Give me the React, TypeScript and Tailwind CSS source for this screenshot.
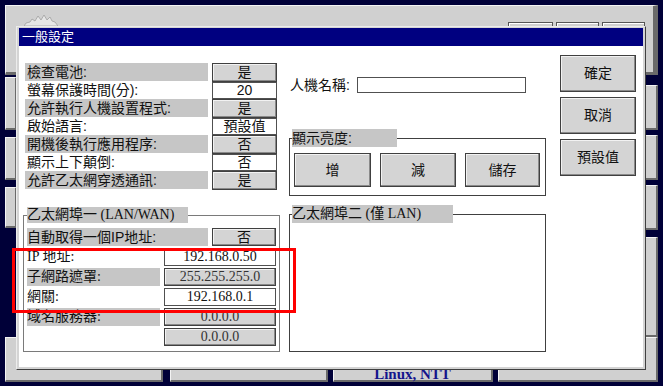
import React from 'react';

const sans = "font-['Liberation_Sans','Noto_Sans_CJK_TC',sans-serif]";
const serif = "font-['Liberation_Serif','Noto_Sans_CJK_TC',serif]";
const btn = "bg-[#d4d4d4] border border-[#404040] shadow-[inset_-1px_-1px_0_#8a8a8a,inset_1px_1px_0_#f2f2f2]";
const field = "bg-white border border-[#505050]";
const bgBtn = "bg-[#d0d0d0] border-t border-l border-t-[#f4f4f4] border-l-[#f4f4f4] border-r-2 border-b-2 border-r-[#6a6a6a] border-b-[#6a6a6a]";

const generalRows = [
  { label: '檢查電池:', value: '是', button: true },
  { label: '螢幕保護時間(分):', value: '20', button: false },
  { label: '允許執行人機設置程式:', value: '是', button: true },
  { label: '啟始語言:', value: '預設值', button: false },
  { label: '開機後執行應用程序:', value: '否', button: true },
  { label: '顯示上下顛倒:', value: '否', button: false },
  { label: '允許乙太網穿透通訊:', value: '是', button: true },
];

const lanRows = [
  { label: 'IP 地址:', value: '192.168.0.50', shaded: false },
  { label: '子網路遮罩:', value: '255.255.255.0', shaded: true },
  { label: '網關:', value: '192.168.0.1', shaded: false },
  { label: '域名服務器:', value: '0.0.0.0', shaded: true },
  { label: '', value: '0.0.0.0', shaded: false, grey: true },
];

const Logo = () => (
  <svg width="34" height="12" viewBox="0 0 34 12">
    <path
      d="M0 12 L2 9 L6 8 L8 5 L11 7 L14 2 L17 6 L20 1 L23 6 L26 3 L28 7 L31 8 L34 12 Z"
      fill="#e6e6e6"
      stroke="#a0a0a0"
      strokeWidth="0.8"
    />
  </svg>
);

const Background = () => (
  <>
    <div className={`h-[70px] flex items-start ${bgBtn} border-r-[5px] border-b-[3px]`}>
      <div className="ml-[18px] mt-[8px]">
        <Logo />
      </div>
      <div className="ml-auto mr-[8px] mt-[16px] flex gap-[3px]">
        <div className="w-[45px] h-[20px] border border-[#555] shadow-[inset_1px_1px_0_#fff]" />
        <div className="w-[43px] h-[20px] border border-[#555] shadow-[inset_1px_1px_0_#fff]" />
        <div className="w-[43px] h-[20px] border border-[#555] shadow-[inset_1px_1px_0_#fff]" />
      </div>
    </div>
    <div className="flex-1 flex justify-between">
      <div className="w-[12px] pt-[2px] flex flex-col gap-[7px]">
        <div className={`h-[53px] ${bgBtn}`} />
        <div className={`h-[43px] ${bgBtn}`} />
        <div className={`h-[41px] ${bgBtn}`} />
      </div>
      <div className="w-[13px] pt-[10px] flex flex-col gap-[5px]">
        <div className={`h-[45px] ${bgBtn}`} />
        <div className={`h-[45px] ${bgBtn}`} />
        <div className={`h-[45px] ${bgBtn}`} />
        <div className={`flex-1 mt-[2px] ${bgBtn} border-b-0`} />
      </div>
    </div>
    <div className="h-[45px] flex">
      <div className={`w-[158px] ${bgBtn}`} />
      <div className={`w-[158px] ml-[7px] ${bgBtn}`} />
      <div className={`w-[160px] ml-[5px] ${bgBtn} flex justify-center pt-[29px]`}>
        <span className="font-['Liberation_Serif',serif] font-bold text-[15px] leading-[15px] text-[#14148c]">Linux, NTT</span>
      </div>
      <div className={`w-[160px] ml-[5px] ${bgBtn}`} />
    </div>
  </>
);

const TopRow = ({ label, value, button }: { label: string; value: string; button: boolean }) => (
  <div className="h-[18px] flex items-center">
    <div className={`w-[183px] h-[18px] leading-[18px] pl-[2px] ${button ? 'bg-[#c6c6c6]' : ''}`}>{label}</div>
    <div
      className={`ml-[4px] w-[65px] text-center ${button ? `h-[19px] leading-[17px] ${btn}` : `h-[17px] leading-[15px] ${field}`}`}
    >
      {value}
    </div>
  </div>
);

const App = () => {
  return (
    <div className={`relative w-[663px] h-[386px] overflow-hidden bg-[#000038] p-[5px] pb-[4px] flex flex-col ${sans} text-[14px] text-[#111]`}>
      <Background />

      <div className="absolute left-[16px] top-[26px] w-[630px] h-[344px] bg-[#d4d4d4] border border-t-[#ececec] border-l-[#ececec] border-r-[#404040] border-b-[#404040] pl-[2px] pt-[1px] pr-[2px] pb-[2px] flex flex-col">
        <div className="h-[18px] bg-[#000080] text-white text-[13px] leading-[18px] pl-[3px]">一般設定</div>
        <div className="flex-1 bg-white pl-[4px] pt-[9px] flex">
          {/* left column */}
          <div className="w-[257px] flex flex-col">
            <div className="mt-[8px] pl-[2px]">
              {generalRows.map((r) => (
                <TopRow key={r.label} {...r} />
              ))}
            </div>
            <fieldset className="mt-[18px] w-[257px] border border-[#7a7a7a] px-[3px] pt-[5px] pb-[5px]">
              <legend className={`w-[161px] h-[16px] leading-[16px] bg-[#c6c6c6] text-[14px] ${serif}`}>乙太網埠一 (LAN/WAN)</legend>
              <div className="flex flex-col gap-[2px]">
                <div className="h-[18px] flex">
                  <div className="w-[181px] bg-[#c6c6c6] leading-[18px]">自動取得一個IP地址:</div>
                  <div className={`ml-[4px] w-[64px] h-[18px] leading-[16px] text-center ${btn}`}>否</div>
                </div>
                {lanRows.map((r, i) => (
                  <div key={i} className="h-[18px] flex">
                    <div className={`w-[133px] leading-[18px] ${serif} ${r.shaded ? 'bg-[#c6c6c6]' : ''}`}>{r.label}</div>
                    <div
                      className={`ml-[4px] w-[112px] h-[18px] leading-[16px] text-center ${serif} ${
                        r.shaded || r.grey ? `${btn} text-[#333]` : field
                      }`}
                    >
                      {r.value}
                    </div>
                  </div>
                ))}
              </div>
            </fieldset>
          </div>

          {/* middle column */}
          <div className="ml-[9px] w-[257px] flex flex-col">
            <div className="mt-[22px] h-[16px] flex items-center">
              <div className="w-[68px] pl-[1px] leading-[16px]">人機名稱:</div>
              <div className={`w-[169px] h-[16px] ${field}`} />
            </div>
            <fieldset className="mt-[36px] border border-[#404040] pl-[4px] pr-[4px] pt-[6px] pb-[8px]">
              <legend className="-ml-[2px] w-[105px] h-[18px] leading-[18px] bg-[#c6c6c6]">顯示亮度:</legend>
              <div className="flex gap-[9px]">
                <div className={`w-[77px] h-[34px] flex items-center justify-center ${btn}`}>增</div>
                <div className={`w-[76px] h-[34px] flex items-center justify-center ${btn}`}>減</div>
                <div className={`w-[75px] h-[34px] flex items-center justify-center ${btn}`}>儲存</div>
              </div>
            </fieldset>
            <fieldset className="mt-[9px] border border-[#404040] pl-[4px]">
              <legend className={`-ml-[2px] w-[161px] h-[18px] leading-[18px] bg-[#c6c6c6] ${serif}`}>乙太網埠二 (僅 LAN)</legend>
              <div className="h-[128px]" />
            </fieldset>
          </div>

          {/* right column */}
          <div className="ml-[14px] w-[76px] flex flex-col gap-[5px]">
            <div className={`h-[37px] flex items-center justify-center ${btn}`}>確定</div>
            <div className={`h-[37px] flex items-center justify-center ${btn}`}>取消</div>
            <div className={`h-[37px] flex items-center justify-center ${btn}`}>預設值</div>
          </div>
        </div>
      </div>

      <div className="absolute left-[12px] top-[248px] w-[284px] h-[65px] border-[3px] border-[#ff0000]" />
    </div>
  );
};

export default App;
